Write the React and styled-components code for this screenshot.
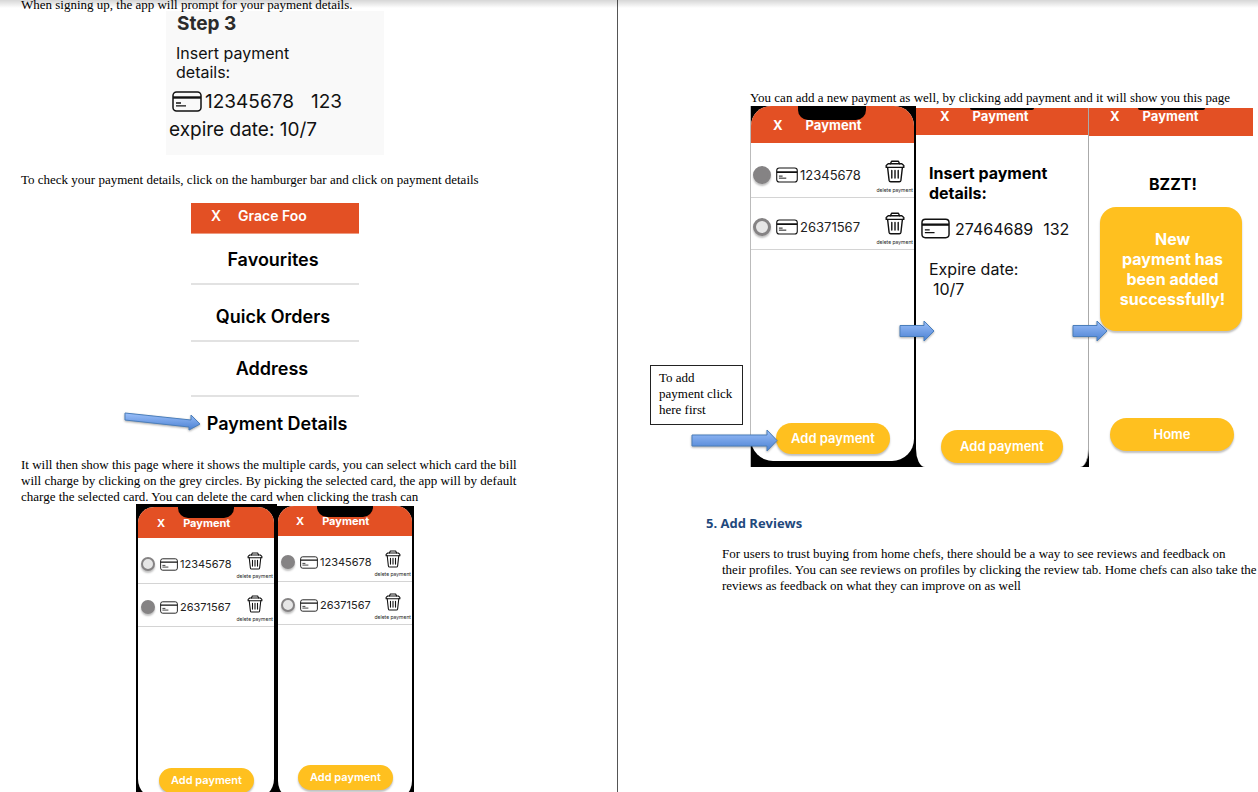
import React, { useId } from "react";
import styled, { createGlobalStyle, css } from "styled-components";

const ORANGE = "#e35024";
const YELLOW = "#ffc01f";

const GlobalStyle = createGlobalStyle`
  *, *::before, *::after { box-sizing: border-box; }
  body { margin: 0; background: #fff; }
  p, h1, h2, h3, ul, figure { margin: 0; padding: 0; }
  ul { list-style: none; }
  button { border: 0; padding: 0; background: none; font: inherit; color: inherit; cursor: pointer; }
  svg { display: block; flex: none; }
`;

const Viewer = styled.main`
  position: relative;
  display: grid;
  grid-template-columns: 618fr 640fr;
  height: 100vh;
  overflow: hidden;
  color: #000;
  font: 13px/16px "Liberation Serif", serif;
`;

const ScrollShade = styled.div`
  position: absolute;
  inset: 0 0 auto;
  height: 8px;
  background: linear-gradient(rgba(0, 0, 0, 0.16), rgba(0, 0, 0, 0));
`;

const LeftPage = styled.section`
  min-width: 0;
  padding: 0 0 0 21px;
  margin-top: -3px;
  border-right: 1px solid #555;
`;

const RightPage = styled.section`
  min-width: 0;
  padding: 90px 0 0 132px;
`;

const Paragraph = styled.p`
  max-width: ${(p) => p.$width || "none"};
`;

/* Sign-up step card */
const StepCard = styled.figure`
  width: 218px;
  height: 144px;
  margin: -2px 0 17px 145px;
  padding: 3px 3px 0;
  background: #f9f9f9;
  color: #111;
  font: 19px/20px Inter, sans-serif;
`;

const StepTitle = styled.h2`
  padding-left: 8px;
  color: #2b2b2b;
  font-size: 19px;
  font-weight: 700;
  line-height: 20px;
`;

const StepHint = styled.p`
  width: 140px;
  padding: 10px 0 0 7px;
  font-size: 16px;
  line-height: 19px;
`;

const CardLine = styled.p`
  display: flex;
  align-items: center;
  gap: ${(p) => p.$gap || "3px"};
  padding: ${(p) => p.$pad || "0"};
`;

const Cvv = styled.span`
  margin-left: ${(p) => p.$space};
`;

/* Side menu */
const Menu = styled.nav`
  position: relative;
  width: 168px;
  margin: 15px 0 6px 170px;
  color: #000;
  font-family: Inter, sans-serif;
`;

const MenuHeader = styled.header`
  display: flex;
  align-items: center;
  gap: 17px;
  height: 31px;
  padding: 0 0 4px 20px;
  background: ${ORANGE};
  border-bottom: 1px solid #ee9a80;
  color: #fff;
  font-size: 14px;
  font-weight: 600;
`;

const MenuItem = styled.li`
  display: flex;
  align-items: center;
  justify-content: center;
  height: ${(p) => p.$height};
  padding: ${(p) => p.$pad || "2px 4px 0 0"};
  border-bottom: ${(p) => (p.$last ? "0" : "2px solid #e2e2e2")};
`;

const MenuLink = styled.a`
  color: inherit;
  font-size: 18px;
  font-weight: 600;
  line-height: 22px;
  text-decoration: none;
  white-space: nowrap;
`;

/* App screens */
const PhoneRow = styled.figure`
  position: relative;
  display: flex;
  align-items: flex-start;
  margin: ${(p) => p.$margin || "0"};
`;

const Frame = styled.div`
  flex: none;
  background: #000;
  font-family: Inter, sans-serif;
  ${(p) =>
    p.$small
      ? css`width: ${p.$width}; height: 300px; margin-top: ${p.$top}; padding: ${p.$pad};`
      : css`width: 166px; height: 361px; padding: 0 2px 6px 0; border-left: 1px solid #bbb;`}
`;

const Screen = styled.div`
  position: relative;
  display: flex;
  flex-direction: column;
  height: 100%;
  overflow: hidden;
  background: #fff;
  border-radius: ${(p) => (p.$small ? "16px 16px 20px 20px" : "20px 20px 22px 22px")};
`;

const Notch = styled.div`
  position: absolute;
  top: 0;
  left: ${(p) => p.$left};
  width: ${(p) => p.$width};
  height: ${(p) => p.$height};
  background: #000;
  border-radius: 0 0 10px 10px;
`;

const AppBar = styled.header`
  position: relative;
  display: flex;
  flex: none;
  align-items: flex-start;
  height: ${(p) => p.$height};
  gap: ${(p) => (p.$small ? "18px" : "23px")};
  padding: ${(p) => p.$pad};
  background: ${ORANGE};
  color: #fff;
  font-size: ${(p) => (p.$small ? "11px" : "13px")};
  line-height: 16px;
  font-weight: 700;
`;

const AppTitle = styled.h3`
  margin: 0;
  font-size: inherit;
  font-weight: inherit;
`;

const CardList = styled.ul`
  flex: 1;
  padding-top: 3px;
`;

const CardRow = styled.li`
  display: flex;
  align-items: flex-start;
  justify-content: space-between;
  border-bottom: 1px solid #d4d4d4;
  ${(p) =>
    p.$small
      ? css`height: 43px; padding: 11px 1px 0 3px;`
      : css`height: 52px; padding: 14px 1px 0 2px;`}
`;

const CardChoice = styled.label`
  display: flex;
  align-items: center;
  color: #222;
  gap: 2px;
  ${(p) =>
    p.$small
      ? css`height: 24px; font-size: 11px;`
      : css`height: 30px; font-size: 13px;`}
`;

const Radio = styled.input`
  appearance: none;
  flex: none;
  width: ${(p) => (p.$small ? "14px" : "18px")};
  height: ${(p) => (p.$small ? "14px" : "18px")};
  margin: 0 3px 0 0;
  border: ${(p) => (p.$small ? "2px" : "3px")} solid #858384;
  border-radius: 50%;
  background: #e6e6e6;
  box-shadow: 0 2px 2px rgba(0, 0, 0, 0.25);
  &:checked { background: #858384; }
`;

const DeleteButton = styled.button`
  display: flex;
  flex-direction: column;
  align-items: center;
  color: #222;
  font-size: 5px;
  line-height: 6px;
  gap: ${(p) => (p.$small ? "3px" : "4px")};
  white-space: nowrap;
`;

const ActionButton = styled.button`
  flex: none;
  align-self: flex-start;
  color: #fff;
  background: ${YELLOW};
  border-radius: 18px;
  box-shadow: 0 2px 2px rgba(0, 0, 0, 0.25);
  font: 600 13px/16px Inter, sans-serif;
  width: ${(p) => p.$width};
  height: ${(p) => p.$height};
  margin: ${(p) => p.$margin};
  padding: 0 0 2px;
  ${(p) => p.$small && css`font-size: 11px;`}
`;

const FormFrame = styled.div`
  flex: none;
  width: 173px;
  height: 359px;
  margin-top: 2px;
  background: #000;
  font-family: Inter, sans-serif;
`;

const FormScreen = styled.div`
  display: flex;
  flex-direction: column;
  height: 100%;
  background: #fff;
  border-right: 1px solid #aaa;
  border-radius: 0 0 9px 9px / 0 0 18px 18px;
  font-size: 16px;
  line-height: 20px;
  color: #111;
`;

const FormTitle = styled.h3`
  width: 150px;
  padding: 28px 0 0 13px;
  color: #000;
  font-size: 16px;
  line-height: 20px;
`;

const Expiry = styled.p`
  flex: 1;
  padding: 20px 0 0 13px;
`;

const ExpiryDate = styled.span`
  display: block;
  padding-left: 4px;
`;

const DonePanel = styled.div`
  flex: none;
  display: flex;
  flex-direction: column;
  width: 164px;
  margin-top: 2px;
  font-family: Inter, sans-serif;
`;

const DoneTitle = styled.h3`
  padding: 38px 0 13px 4px;
  color: #000;
  font-size: 16px;
  line-height: 20px;
  text-align: center;
`;

const DoneMessage = styled.p`
  display: flex;
  align-items: center;
  justify-content: center;
  width: 142px;
  height: 124px;
  margin-left: 11px;
  padding: 0 10px 0 13px;
  background: ${YELLOW};
  border-radius: 16px;
  box-shadow: 0 2px 2px rgba(0, 0, 0, 0.25);
  color: #fff;
  font-size: 16px;
  font-weight: 700;
  line-height: 20px;
  text-align: center;
`;

const Callout = styled.aside`
  position: absolute;
  left: -100px;
  top: 259px;
  width: 93px;
  height: 60px;
  padding: 4px 8px;
  background: #fff;
  border: 1px solid #222;
`;

const ArrowSlot = styled.span`
  position: absolute;
  left: ${(p) => p.$x};
  top: ${(p) => p.$y};
`;

const SectionTitle = styled.h2`
  margin: 48px 0 15px -44px;
  color: #1f497d;
  font: 700 13px/16px "Open Sans", sans-serif;
`;

const Review = styled.div`
  margin-left: -28px;
  white-space: nowrap;
`;

function CardIcon({ width, height }) {
  return (
    <svg width={width} height={height} viewBox="0 0 30 21" fill="none" stroke="#111" aria-hidden="true">
      <rect x="1" y="1" width="28" height="19" rx="3.5" strokeWidth="1.5" />
      <path d="M1 6.5h28" strokeWidth="2.4" />
      <path d="M4 12h5M4 14.8h10" strokeWidth="1.3" />
    </svg>
  );
}

function TrashIcon({ width, height }) {
  return (
    <svg width={width} height={height} viewBox="0 0 20 23" fill="none" stroke="#111" strokeWidth="1.4" strokeLinejoin="round" strokeLinecap="round" aria-hidden="true">
      <path d="M5.4 3.8 6.6 1.2h6.8l1.2 2.6" />
      <path d="M1.2 7.4V5.6l2-1.8h13.6l2 1.8v1.8z" />
      <path d="m2.6 7.4 1.5 13q.2 1.4 1.6 1.4h8.6q1.4 0 1.6-1.4l1.5-13" />
      <path d="M6.8 10.5v7.5M10 10.5v7.5M13.2 10.5v7.5" />
    </svg>
  );
}

function Arrow({ width, height, shaft, head, tilt }) {
  const id = useId();
  const mid = height / 2;
  const neck = width - head;
  const points = tilt
    ? "1,1 67,8 67,3 76,12 65,18 65,15 1,8"
    : `1,${mid - shaft / 2} ${neck},${mid - shaft / 2} ${neck},1 ${width - 1},${mid} ${neck},${height - 1} ${neck},${mid + shaft / 2} 1,${mid + shaft / 2}`;
  return (
    <svg width={width} height={height} viewBox={`0 0 ${width} ${height}`} overflow="visible" style={{ filter: "drop-shadow(0 1px 1px rgba(0,0,0,.35))" }} aria-hidden="true">
      <defs>
        <linearGradient id={id} x1="0" y1="0" x2="0" y2="1">
          <stop offset="0" stopColor="#9cc0fa" />
          <stop offset="1" stopColor="#4a80d2" />
        </linearGradient>
      </defs>
      <polygon points={points} fill={`url(#${id})`} stroke="#4a7ebb" strokeWidth="1" />
    </svg>
  );
}

const CARDS = ["12345678", "26371567"];

function PaymentPhone({ small, selected, width, top, pad, barHeight, barPad, notch, button }) {
  const name = useId();
  return (
    <Frame $small={small} $width={width} $top={top} $pad={pad}>
      <Screen $small={small}>
        <AppBar $small={small} $height={barHeight} $pad={barPad}>
          <button aria-label="Close">X</button>
          <AppTitle>Payment</AppTitle>
          <Notch $left={notch[0]} $width={notch[1]} $height={notch[2]} />
        </AppBar>
        <CardList>
          {CARDS.map((number, i) => (
            <CardRow key={number} $small={small}>
              <CardChoice $small={small}>
                <Radio type="radio" name={name} $small={small} defaultChecked={i === selected} />
                <CardIcon width={small ? 18 : 22} height={small ? 13 : 16} />
                {number}
              </CardChoice>
              <DeleteButton $small={small}>
                <TrashIcon width={small ? 16 : 20} height={small ? 18 : 23} />
                delete payment
              </DeleteButton>
            </CardRow>
          ))}
        </CardList>
        <ActionButton $small={small} $width={button[0]} $height={button[1]} $margin={button[2]}>
          Add payment
        </ActionButton>
      </Screen>
    </Frame>
  );
}

export default function App() {
  return (
    <>
      <GlobalStyle />
      <Viewer>
        <LeftPage>
          <Paragraph>When signing up, the app will prompt for your payment details.</Paragraph>
          <StepCard>
            <StepTitle>Step 3</StepTitle>
            <StepHint>Insert payment details:</StepHint>
            <CardLine $pad="9px 0 0 3px">
              <CardIcon width={30} height={21} />
              12345678
              <Cvv $space="14px">123</Cvv>
            </CardLine>
            <CardLine $pad="8px 0 0">expire date: 10/7</CardLine>
          </StepCard>
          <Paragraph>To check your payment details, click on the hamburger bar and click on payment details</Paragraph>
          <Menu>
            <MenuHeader>
              <button aria-label="Close menu">X</button>
              <span>Grace Foo</span>
            </MenuHeader>
            <ul>
              <MenuItem $height="51px"><MenuLink href="#favourites">Favourites</MenuLink></MenuItem>
              <MenuItem $height="57px" $pad="8px 4px 0 0"><MenuLink href="#orders">Quick Orders</MenuLink></MenuItem>
              <MenuItem $height="55px" $pad="0 6px 0 0"><MenuLink href="#address">Address</MenuLink></MenuItem>
              <MenuItem $height="54px" $pad="0 0 0 4px" $last><MenuLink href="#payment">Payment Details</MenuLink></MenuItem>
            </ul>
            <ArrowSlot $x="-67px" $y="209px"><Arrow width={77} height={19} tilt /></ArrowSlot>
          </Menu>
          <Paragraph $width="500px">
            It will then show this page where it shows the multiple cards, you can select which card the bill
            will charge by clicking on the grey circles. By picking the selected card, the app will by default
            charge the selected card. You can delete the card when clicking the trash can
          </Paragraph>
          <PhoneRow $margin="-1px 0 0 115px">
            <PaymentPhone
              small selected={1} width="141px" top="0" pad="3px 3px 5px 2px"
              barHeight="31px" barPad="8px 0 0 19px" notch={["40px", "56px", "11px"]}
              button={["95px", "25px", "0 0 6px 21px"]}
            />
            <PaymentPhone
              small selected={0} width="137px" top="2px" pad="0 2px 5px 1px"
              barHeight="30px" barPad="7px 0 0 18px" notch={["39px", "56px", "11px"]}
              button={["95px", "25px", "0 0 11px 20px"]}
            />
          </PhoneRow>
        </LeftPage>
        <RightPage>
          <Paragraph>You can add a new payment as well, by clicking add payment and it will show you this page</Paragraph>
          <PhoneRow>
            <PaymentPhone
              selected={0} barHeight="37px" barPad="11px 0 0 22px" notch={["47px", "68px", "14px"]}
              button={["114px", "31px", "0 0 7px 25px"]}
            />
            <FormFrame>
              <FormScreen>
                <AppBar $height="27px" $pad="0 0 0 24px">
                  <button aria-label="Close">X</button>
                  <AppTitle>Payment</AppTitle>
                  <Notch $left="54px" $width="64px" $height="2px" />
                </AppBar>
                <FormTitle>Insert payment details:</FormTitle>
                <CardLine $gap="5px" $pad="15px 0 0 5px">
                  <CardIcon width={29} height={21} />
                  27464689
                  <Cvv $space="5px">132</Cvv>
                </CardLine>
                <Expiry>Expire date: <ExpiryDate>10/7</ExpiryDate></Expiry>
                <ActionButton $width="122px" $height="33px" $margin="0 0 4px 25px">Add payment</ActionButton>
              </FormScreen>
            </FormFrame>
            <DonePanel>
              <AppBar $height="28px" $pad="0 0 0 21px">
                <button aria-label="Close">X</button>
                <AppTitle>Payment</AppTitle>
                <Notch $left="49px" $width="67px" $height="2px" />
              </AppBar>
              <DoneTitle>BZZT!</DoneTitle>
              <DoneMessage>
                <span>New<br />payment has been added successfully!</span>
              </DoneMessage>
              <ActionButton $width="124px" $height="33px" $margin="87px 0 0 21px">Home</ActionButton>
            </DonePanel>
            <Callout>To add payment click here first</Callout>
            <ArrowSlot $x="-59px" $y="323px"><Arrow width={87} height={23} shaft={11} head={11} /></ArrowSlot>
            <ArrowSlot $x="149px" $y="214px"><Arrow width={36} height={22} shaft={11} head={11} /></ArrowSlot>
            <ArrowSlot $x="322px" $y="214px"><Arrow width={36} height={22} shaft={11} head={11} /></ArrowSlot>
          </PhoneRow>
          <SectionTitle>5. Add Reviews</SectionTitle>
          <Review>
            <Paragraph>
              For users to trust buying from home chefs, there should be a way to see reviews and feedback on<br />
              their profiles. You can see reviews on profiles by clicking the review tab. Home chefs can also take the<br />
              reviews as feedback on what they can improve on as well
            </Paragraph>
          </Review>
        </RightPage>
        <ScrollShade />
      </Viewer>
    </>
  );
}
